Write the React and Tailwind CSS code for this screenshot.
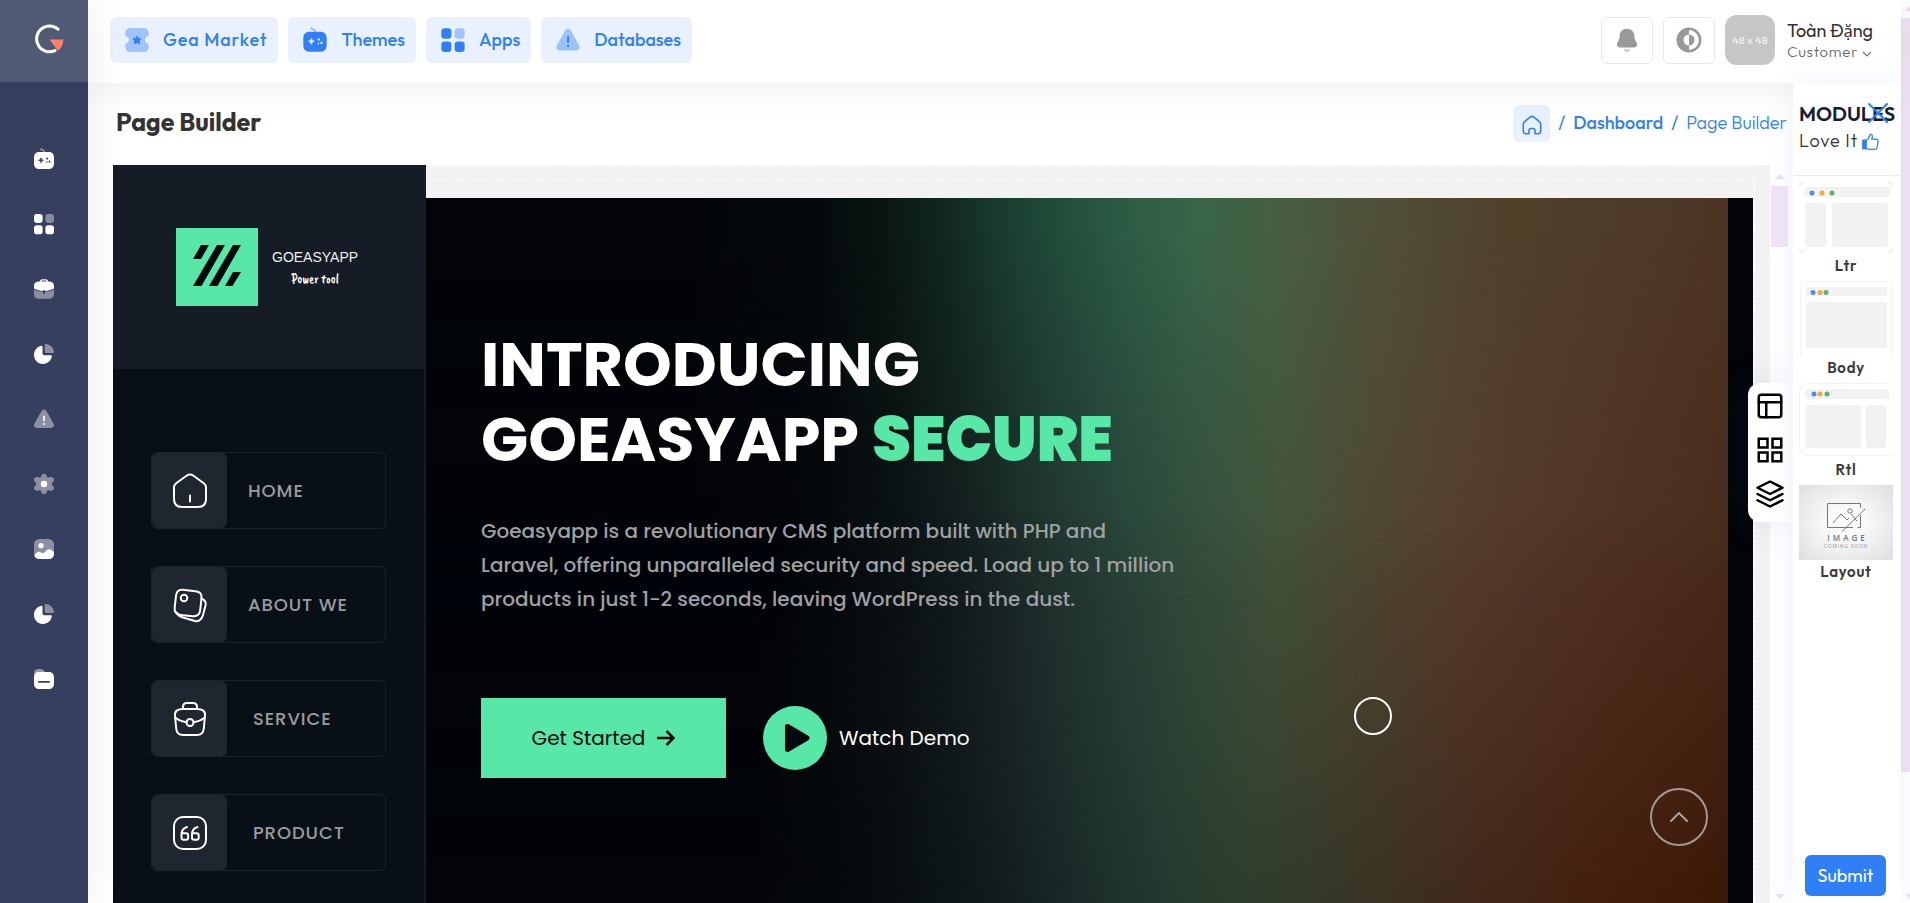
import React from "react";

const sans = "font-['Outfit','Lato',sans-serif]";
const hero = "font-['Poppins','Inter',sans-serif]";

function Game(props) {
  return (
    <svg viewBox="0 0 24 24" fill="currentColor" aria-hidden="true" {...props}>
      <path opacity=".5" d="M8.600 1.200a.7.7 0 0 1 1 .3c.2.5.4.7 1.100.8 1.200.1 2.100.9 2.200 2.200V6h-1.400V4.700c0-.6-.4-.9-1.100-1-1-.1-1.800-.6-2.200-1.500a.7.7 0 0 1 .4-1z" />
      <path
        fillRule="evenodd"
        d="M8 5h8c4.300 0 6 1.900 6 6v5c0 4.100-1.700 6-6 6H8c-4.300 0-6-1.900-6-6v-5c0-4.100 1.700-6 6-6zM8.200 10.800v1.700H6.500v1.500h1.700v1.700h1.500V14h1.700v-1.500H9.700v-1.700zM15.200 10.500a1 1 0 1 0 .01 0zM17.600 13.500a1 1 0 1 0 .01 0zM14.900 14.300a.7.7 0 1 0 .01 0z"
      />
    </svg>
  );
}

function Grid(props) {
  return (
    <svg viewBox="0 0 24 24" fill="currentColor" aria-hidden="true" {...props}>
      <rect x="2" y="2" width="8.600" height="8.900" rx="2.800" />
      <rect x="13.400" y="2" width="8.600" height="8.900" rx="2.800" opacity=".4" />
      <rect x="2" y="13.300" width="8.600" height="8.900" rx="2.800" />
      <rect x="13.400" y="13.300" width="8.600" height="8.900" rx="2.800" />
    </svg>
  );
}

function Warning(props) {
  return (
    <svg viewBox="0 0 24 24" fill="currentColor" aria-hidden="true" {...props}>
      <path opacity=".42" d="M9.600 3.900c1.200-2 3.600-2 4.800 0l7 12.400c1.300 2.300.2 4.700-2.500 4.700H5.100c-2.700 0-3.800-2.400-2.500-4.700z" />
      <rect x="11.200" y="8.500" width="1.700" height="6" rx=".85" />
      <circle cx="12.050" cy="17" r="1" />
    </svg>
  );
}

function Ticket(props) {
  return (
    <svg viewBox="0 0 24 24" fill="currentColor" aria-hidden="true" {...props}>
      <path opacity=".4" d="M7 1.800h10c3.300 0 4.900 1.400 5 4.900v1.400c0 .5-.3.900-.8 1a2.900 2.900 0 0 0 0 5.700c.5.1.8.5.8 1v1.500c-.1 3.500-1.700 4.900-5 4.900H7c-3.300 0-4.900-1.400-5-4.900v-1.500c0-.5.3-.9.8-1a2.900 2.900 0 0 0 0-5.700c-.5-.1-.8-.5-.8-1V6.700c.1-3.500 1.700-4.900 5-4.900z" />
      <path d="M12 8.600l1.100 2.100 2.400.4-1.700 1.700.4 2.400-2.200-1.100-2.200 1.100.4-2.400-1.700-1.700 2.400-.4z" stroke="currentColor" strokeWidth=".8" strokeLinejoin="round" />
    </svg>
  );
}

function Briefcase(props) {
  return (
    <svg viewBox="0 0 24 24" fill="currentColor" aria-hidden="true" {...props}>
      <path opacity=".42" d="M2 12.500c3 1.500 6 2.200 9 2.300v1.400c0 1.100 2 1.100 2 0v-1.400c3-.1 6-.8 9-2.300v4.300c0 3.300-1.700 5-5 5H7c-3.300 0-5-1.700-5-5z" />
      <path fillRule="evenodd" d="M8 4.500C8.100 2.900 9 2.200 10.500 2.200h3c1.500 0 2.400.7 2.500 2.300h1c3.300 0 5 1.500 5 4.500v2.500c-3 1.500-6 2.300-9 2.400-.2-1.300-1.800-1.300-2 0-3-.1-6-.9-9-2.400V9c0-3 1.700-4.500 5-4.500zm1.400 0h5.200c-.1-.8-.4-1-1.200-1h-2.800c-.8 0-1.100.2-1.200 1z" />
    </svg>
  );
}

function Pie(props) {
  return (
    <svg viewBox="0 0 24 24" fill="currentColor" aria-hidden="true" {...props}>
      <path opacity=".42" d="M12.700 3c0-.8.500-1.200 1.300-1.100 4.300.5 7.400 3.500 7.900 7.800.1.800-.3 1.300-1.100 1.300h-6.300c-1.200 0-1.800-.6-1.800-1.800z" />
      <path d="M10.500 4.700v6.600c0 1.300.7 2 2 2h6.300c.7 0 1.100.5 1 1.200-.7 4.400-4.300 7.400-8.900 7.400-5 0-8.900-3.900-8.900-8.900 0-4.600 3-8.500 7.400-9.300.7-.1 1.100.3 1.100 1z" />
    </svg>
  );
}

function Gear(props) {
  return (
    <svg viewBox="0 0 24 24" fill="currentColor" aria-hidden="true" {...props}>
      <path opacity=".42" d="M9.200 4.200C9.500 2.600 10.500 1.800 12 1.800s2.500.8 2.800 2.400c.3 1.100 1 1.500 2.100 1.200 3-1 4.300-.2 4.900 1.400.5 1.500 0 2.400-1.300 3.500-1 .9-1 2.100 0 3.300 1.300 1.100 1.800 2.100 1.300 3.500-.6 1.500-1.900 2.200-4.900 1.300-1.100-.3-1.800.1-2.100 1.200-.3 1.800-1.300 2.600-2.800 2.600s-2.500-.8-2.800-2.600c-.3-1.100-1-1.500-2.100-1.200-3 .9-4.300.2-4.900-1.300-.5-1.400 0-2.400 1.300-3.500 1-1.200 1-2.400 0-3.300-1.300-1.100-1.800-2-1.300-3.500.6-1.600 1.900-2.400 4.900-1.400 1.100.3 1.800-.1 2.100-1.200z" />
      <circle cx="12" cy="12" r="3.200" />
    </svg>
  );
}

function Picture(props) {
  return (
    <svg viewBox="0 0 24 24" fill="currentColor" aria-hidden="true" {...props}>
      <rect opacity=".42" x="2" y="2" width="20" height="20" rx="5.500" />
      <circle cx="9" cy="8.700" r="2.600" />
      <path d="M2.300 18.200l2.400-2.400c1.700-1.500 3-1.300 4.600-.1 1.200.8 2.100.7 3.200-.3l2.400-2.300c1.500-1.300 3-1.300 4.600 0L22 15v1.500c0 3.600-2 5.500-5.500 5.500h-9c-2.700 0-4.600-1.300-5.200-3.800z" />
    </svg>
  );
}

function Folder(props) {
  return (
    <svg viewBox="0 0 24 24" fill="currentColor" aria-hidden="true" {...props}>
      <path opacity=".45" d="M2 8V6.500C2 3.500 3.500 2 6.500 2h2c1.500 0 2.500.5 3.500 1.800l1.200 1.700z" />
      <path fillRule="evenodd" d="M7.500 5h9C20 5 22 7 22 10.500v6c0 3.500-2 5.500-5.500 5.500h-9C4 22 2 20 2 16.500v-6C2 7 4 5 7.500 5zM6.800 14.100a.8.8 0 0 0 0 1.600h10.400a.8.8 0 0 0 0-1.600z" />
    </svg>
  );
}

function Bell() {
  return (
    <svg viewBox="0 0 24 24" className="size-[26px]" fill="#999" aria-hidden="true">
      <path d="M12 1.500c4 0 6.600 2.700 6.800 6.400.1 2.600.2 3.700 1.600 5.800 1.900 2.800.7 5.300-2.600 5.300H6.200c-3.300 0-4.500-2.500-2.600-5.300C5 11.600 5.100 10.500 5.200 7.900 5.400 4.200 8 1.500 12 1.500z" />
      <path opacity=".5" d="M9 20.600h6c-.3 1.600-1.400 2.600-3 2.600s-2.700-1-3-2.600z" />
    </svg>
  );
}

const rail = [
  ["Themes", Game],
  ["Apps", Grid],
  ["Business", Briefcase],
  ["Statistics", Pie],
  ["Alerts", Warning],
  ["Settings", Gear],
  ["Media", Picture],
  ["Reports", Pie],
  ["Files", Folder],
];

function Sidebar() {
  return (
    <aside className="z-30 flex w-[88px] shrink-0 flex-col bg-[#373f5e] shadow-[0_0_40px_rgba(0,0,0,0.08)]">
      <a href="#" aria-label="Home" className="flex h-[82px] items-center justify-center bg-[#515a75] pb-1 pl-[9px]">
        <svg viewBox="0 0 30 30" className="size-[30px]" aria-hidden="true">
          <path d="M24 5.200A12.900 12.900 0 1 0 21 26.600" fill="none" stroke="#fff" strokeWidth="3" strokeLinecap="round" />
          <path d="M15.500 15.500h13.800c0 5-2 8.800-5.300 11.200z" fill="#ff8064" />
        </svg>
      </a>
      <nav aria-label="Sections" className="flex flex-col items-center gap-[41px] pt-[65px] text-white">
        {rail.map(([label, Icon]) => (
          <a key={label} href="#" aria-label={label}>
            <Icon className="size-6" />
          </a>
        ))}
      </nav>
    </aside>
  );
}

const shortcuts = [
  ["Gea Market", Ticket, "tracking-wider"],
  ["Themes", Game, ""],
  ["Apps", Grid, ""],
  ["Databases", Warning, ""],
];

function Header() {
  return (
    <header className="z-20 flex h-[83px] shrink-0 items-center justify-between bg-white pb-[3px] pl-[22px] pr-[29px] shadow-[0_0_40px_rgba(0,0,0,0.09)]">
      <nav aria-label="Shortcuts" className="flex gap-[10px]">
        {shortcuts.map(([label, Icon, extra]) => (
          <a key={label} href="#" className={`flex h-[46px] items-center gap-3 rounded-md bg-[#e9f1fe] pl-[13px] pr-[11px] text-lg font-medium text-[#2f80f7] ${extra}`}>
            <Icon className="size-7" />
            {label}
          </a>
        ))}
      </nav>
      <div className="flex items-center gap-[10px]">
        <button type="button" aria-label="Notifications" className="flex h-[47px] w-[52px] items-center justify-center rounded-md border border-[#e8e8e8]">
          <Bell />
        </button>
        <button type="button" aria-label="Toggle theme" className="flex h-[47px] w-[52px] items-center justify-center rounded-md border border-[#e8e8e8]">
          <svg viewBox="0 0 26 26" className="size-[26px]" aria-hidden="true">
            <circle cx="13" cy="13" r="11.200" fill="none" stroke="#999" strokeWidth="2.600" />
            <path d="M13 1v6.500a5.500 5.500 0 0 0 0 11V25A12 12 0 0 1 13 1z" fill="#999" />
            <path d="M13 7.500a5.500 5.500 0 0 1 0 11z" fill="#999" />
          </svg>
        </button>
        <div className="flex size-[50px] items-center justify-center rounded-xl bg-[#c6c6c6] text-[11px] font-light text-white">48 x 48</div>
        <div className="ml-0.5 w-[85px] whitespace-nowrap pt-0.5">
          <div className="text-lg leading-[22px] text-[#333]">Toàn Đặng</div>
          <button type="button" className="flex items-center gap-1 text-[15px] font-light leading-5 tracking-wider text-[#666]">
            Customer
            <svg viewBox="0 0 10 10" className="mt-1 size-[10px]" fill="none" stroke="#777" strokeWidth="1.200" aria-hidden="true">
              <path d="M1 3l4 4 4-4" />
            </svg>
          </button>
        </div>
      </div>
    </header>
  );
}

function TitleRow() {
  return (
    <div className="flex h-[82px] shrink-0 items-center justify-between pb-[2px] pl-7 pr-[6px]">
      <h1 className="text-[25px] font-bold text-[#333]">Page Builder</h1>
      <nav aria-label="Breadcrumb" className="flex items-center gap-2 text-lg text-[#2f80f7]">
        <a href="#" aria-label="Home" className="flex size-[37px] items-center justify-center rounded-md bg-[#e9f1fe]">
          <svg viewBox="0 0 20 20" className="mt-1 size-5" fill="none" stroke="currentColor" strokeWidth="1.600" strokeLinejoin="round" aria-hidden="true">
            <path d="M7 18.800H4.200C2.300 18.800 1.300 17.700 1.300 16V9.200c0-1.100.4-1.900 1.300-2.600l5.500-4.500c1.300-1 2.500-1 3.800 0l5.500 4.500c.9.700 1.300 1.500 1.300 2.600V16c0 1.700-1 2.800-2.900 2.800H13v-3.300c0-1.300-.6-2-1.800-2H8.800c-1.200 0-1.800.7-1.800 2z" />
          </svg>
        </a>
        <span>/</span>
        <a href="#" className="font-medium">Dashboard</a>
        <span>/</span>
        <a href="#" className="font-light">Page Builder</a>
      </nav>
    </div>
  );
}

const lineIcon = {
  viewBox: "0 0 36 36",
  className: "size-9",
  fill: "none",
  stroke: "#fff",
  strokeWidth: 2,
  strokeLinecap: "round",
  strokeLinejoin: "round",
  "aria-hidden": true,
};

const menu = [
  [
    "HOME",
    "pl-[21px]",
    <svg {...lineIcon}>
      <path d="M2 14.500c0-2 .6-3.100 2.200-4.300l10.300-7.400c2.400-1.700 4.600-1.700 7 0l10.300 7.400c1.600 1.200 2.200 2.300 2.200 4.300V26c0 5.200-2.800 8-8 8H10c-5.200 0-8-2.800-8-8z" />
      <path d="M18 22.500v6" />
    </svg>,
  ],
  [
    "ABOUT WE",
    "pl-[21px]",
    <svg {...lineIcon}>
      <path d="M10.500 2.700l13 1.500c4.700.5 6.500 3 6 7.500l-1.300 11.500c-.5 4.500-3 6.500-7.500 6l-12-1.300c-4.500-.5-6.600-3-6-7.500L4 9c.5-4.500 2.200-6.700 6.500-6.300z" />
      <circle cx="12" cy="11" r="3.300" />
      <path d="M29.500 11.500c3.500 1.500 4.800 3.500 4 7L31 28c-1.500 5-4 6.800-8 6L11 30.500c-3-.8-5-2-6.500-5" />
    </svg>,
  ],
  [
    "SERVICE",
    "pl-[26px]",
    <svg {...lineIcon}>
      <path d="M11 8V6c0-2.800 1.300-4 4-4h6c2.700 0 4 1.200 4 4v2M11 8h14c5.500 0 8.500 2.200 8 6.500l-1.200 13c-.4 4.500-2.500 6.500-7 6.500H11.200c-4.500 0-6.600-2-7-6.500L3 14.500C2.500 10.200 5.500 8 11 8z" />
      <circle cx="18" cy="21.500" r="3.500" />
      <path d="M3 16.500c3.500 2.700 7.500 4.300 11.500 4.700M33 16.500c-3.500 2.700-7.500 4.300-11.500 4.700" />
    </svg>,
  ],
  [
    "PRODUCT",
    "pl-[26px]",
    <svg {...lineIcon}>
      <rect x="2" y="2" width="32" height="32" rx="9" />
      <path d="M15 12c-4 1-5.500 3-5.500 8v2.500c0 1.500.7 2.200 2.200 2.200h2.300c1.500 0 2.200-.7 2.200-2.200v-2c0-1.500-.7-2.200-2.200-2.200H9.800M25.500 12c-4 1-5.500 3-5.500 8v2.500c0 1.500.7 2.200 2.200 2.200h2.300c1.500 0 2.200-.7 2.200-2.200v-2c0-1.500-.7-2.200-2.200-2.200h-4.200" />
    </svg>,
  ],
];

function SiteMenu() {
  return (
    <div className={`flex w-[313px] shrink-0 flex-col bg-[#080f17] ${hero}`}>
      <a href="#" className="flex h-[204px] items-center gap-[14px] bg-[#161c25] pl-[63px]">
        <svg viewBox="0 0 82 78" className="h-[78px] w-[82px]" aria-hidden="true">
          <path fill="#57e8a7" d="M0 0h82v78H0z" />
          <path fill="#05090e" d="M25 17h8l-8 14h-8zM41 17h8L25.500 58H17zM57 17h8L41.500 58H33zM57 44h8l-8.500 14H49z" />
        </svg>
        <span className="flex flex-col items-center pt-1 text-white">
          <span className="font-['Liberation_Sans',sans-serif] text-sm leading-5 text-[#eee]">GOEASYAPP</span>
          <span className="font-['Caveat_Brush','Patrick_Hand','Caveat','Lato',sans-serif] text-[13px] leading-6">Power tool</span>
        </span>
      </a>
      <nav aria-label="Site" className="flex flex-1 flex-col gap-[37px] border-r-2 border-[#161b23] pl-[38px] pr-[38px] pt-[83px]">
        {menu.map(([label, pad, icon]) => (
          <a key={label} href="#" className="flex h-[77px] shrink-0 items-center rounded-md border border-[#1c222a]">
            <span className="flex h-full w-[75px] items-center justify-center rounded-md bg-[#20262f]">{icon}</span>
            <span className={`text-lg font-medium tracking-wider text-[#9b9b9b] ${pad}`}>{label}</span>
          </a>
        ))}
      </nav>
    </div>
  );
}

function Hero() {
  return (
    <section className={`relative flex-1 bg-[#020409] pr-[25px] ${hero}`}>
      <div className="relative h-full pl-[55px] pt-[129px]">
        <div className="absolute inset-0 bg-[linear-gradient(93deg,#020409_28%,#0b1013_36%,#151d1f_42%,#21312e_48%,#2a4238_54%,#374d3c_60%,#43523a_65%,#4e4832_71%,#573e2c_78%,#54372a_84%,#4f3021_92%,#482a1c_100%)]" />
        <div className="absolute inset-0 bg-[linear-gradient(90deg,#020409_20%,#05090d_30%,#0a1512_35%,#11281f_40%,#1d4434_46%,#2b5a45_53%,#386548_59%,#465f42_65%,#505038_73%,#50412b_83%,#4d3424_100%)] [mask-image:linear-gradient(#000_5%,rgba(0,0,0,.5)_30%,transparent_60%)]" />
        <div className="absolute inset-0 bg-[linear-gradient(90deg,#020409_25%,#070b0e_34%,#101a1b_43%,#1a2a28_50%,#24392f_57%,#2e3d2c_63%,#353828_69%,#3b3022_75%,#42281a_81%,#43200f_89%,#3c1806_100%)] [mask-image:linear-gradient(transparent_45%,rgba(0,0,0,.5)_75%,#000)]" />
        <div className="relative">
          <h2 className="text-[62px] font-bold leading-[75px] text-white">
            <span className="block">INTRODUCING</span>
            <span className="block">
              GOEASYAPP <span className="font-black text-[#57e8a7]">SECURE</span>
            </span>
          </h2>
          <p className="mt-[37px] text-xl font-medium leading-[34px] text-[#9fa1a2]">
            Goeasyapp is a revolutionary CMS platform built with PHP and
            <br />
            Laravel, offering unparalleled security and speed. Load up to 1 million
            <br />
            products in just 1-2 seconds, leaving WordPress in the dust.
          </p>
          <div className="mt-[82px] flex items-center gap-[37px]">
            <a href="#" className="flex h-20 w-[245px] items-center justify-center gap-3 bg-[#57e8a7] text-xl text-[#05090e]">
              Get Started
              <svg viewBox="0 0 18 18" className="size-[18px]" fill="none" stroke="currentColor" strokeWidth="2.600" aria-hidden="true">
                <path d="M0 9h16M9.500 2L16.500 9l-7 7" />
              </svg>
            </a>
            <a href="#" className="flex items-center gap-3 text-xl text-white">
              <svg viewBox="0 0 64 64" className="size-16" aria-hidden="true">
                <circle cx="32" cy="32" r="32" fill="#57e8a7" />
                <path d="M24.500 20.500L44 32 24.500 43.500z" fill="#05090e" stroke="#05090e" strokeWidth="5" strokeLinejoin="round" />
              </svg>
              Watch Demo
            </a>
          </div>
        </div>
        <span className="absolute right-[336px] top-[499px] size-[38px] rounded-full border-2 border-white" />
        <button type="button" aria-label="Back to top" className="absolute right-[20px] top-[590px] flex size-[58px] items-center justify-center rounded-full border-2 border-[#a09a96]">
          <svg viewBox="0 0 18 10" className="h-[10px] w-[18px]" fill="none" stroke="#a8a29e" strokeWidth="2" strokeLinecap="round" aria-hidden="true">
            <path d="M1 9l8-8 8 8" />
          </svg>
        </button>
      </div>
    </section>
  );
}

function Arrow({ down }) {
  return (
    <svg viewBox="0 0 10 5" className="h-[5px] w-[10px] shrink-0" fill="#ecdff2" aria-hidden="true">
      <path d={down ? "M0 0h10L5 5z" : "M5 0l5 5H0z"} />
    </svg>
  );
}

function FrameTabs() {
  const p = { viewBox: "0 0 24 24", className: "size-[30px]", fill: "none", stroke: "#000", strokeWidth: 2, strokeLinejoin: "round", strokeLinecap: "round", "aria-hidden": true };
  return (
    <div className="absolute right-0 top-[300px] z-10 flex w-[45px] flex-col gap-[14px] rounded-l-xl bg-white pb-[13px] pl-[7px] pt-2 shadow-[-4px_0_40px_rgba(60,80,160,0.12)]">
      <button type="button" aria-label="Layout">
        <svg {...p}>
          <rect x="3" y="3" width="18" height="18" rx="2" />
          <path d="M3 9h18M9 21V9" />
        </svg>
      </button>
      <button type="button" aria-label="Blocks">
        <svg {...p} strokeLinejoin="miter">
          <path d="M3 3h7v7H3zM14 3h7v7h-7zM14 14h7v7h-7zM3 14h7v7H3z" />
        </svg>
      </button>
      <button type="button" aria-label="Layers">
        <svg {...p}>
          <path d="M12 2L2 7l10 5 10-5zM2 17l10 5 10-5M2 12l10 5 10-5" />
        </svg>
      </button>
    </div>
  );
}

function Dots({ xs, y }) {
  return (
    <>
      <circle cx={xs[0]} cy={y} r="2.500" fill="#4b8df8" />
      <circle cx={xs[1]} cy={y} r="2.500" fill="#efad35" />
      <circle cx={xs[2]} cy={y} r="2.500" fill="#62b266" />
    </>
  );
}

const thumb = { viewBox: "0 0 94 75", className: "h-[75px] w-[94px]", "aria-hidden": true };

const modules = [
  [
    "Ltr",
    <svg {...thumb}>
      <path d="M0 3h6L0 9zM94 3h-6l6 6zM0 74h6l-6-6zM94 74h-6l6-6z" fill="#f3f3f3" />
      <rect x="5" y="8" width="86" height="10" rx="3" fill="#f2f2f2" />
      <rect x="6" y="24" width="21" height="44" rx="3" fill="#f2f2f2" />
      <rect x="33" y="24" width="56" height="44" rx="3" fill="#f2f2f2" />
      <Dots xs={[13, 23, 33]} y={14} />
    </svg>,
  ],
  [
    "Body",
    <svg {...thumb}>
      <rect x="1.500" y=".5" width="92" height="78" rx="4" fill="none" stroke="#f2f2f2" />
      <rect x="7" y="6" width="81" height="9" rx="3" fill="#f2f2f2" />
      <rect x="7" y="21" width="81" height="46" rx="3" fill="#f2f2f2" />
      <Dots xs={[14, 21, 27]} y={11.5} />
    </svg>,
  ],
  [
    "Rtl",
    <svg {...thumb}>
      <rect x=".5" y=".5" width="96" height="72" rx="9" fill="none" stroke="#f2f2f2" />
      <rect x="6" y="6" width="84" height="10" rx="3" fill="#f2f2f2" />
      <rect x="6" y="22" width="56" height="43" rx="3" fill="#f2f2f2" />
      <rect x="67" y="22" width="20" height="43" rx="3" fill="#f2f2f2" />
      <Dots xs={[15, 21, 28]} y={11} />
    </svg>,
  ],
  [
    "Layout",
    <span className="flex h-[75px] w-[94px] flex-col items-center bg-[radial-gradient(#fbfbfb_25%,#dcdee0)] pt-[18px] text-[#777]">
      <svg viewBox="0 0 38 30" className="h-[30px] w-[38px] shrink-0" fill="none" stroke="currentColor" aria-hidden="true">
        <path d="M26 24.500H.5V.5h33v4M33.500 12v12.500h-3M38 6L15 28.500M6 20l8-9 6 6 2-2M24 11l6 7" />
        <circle cx="23" cy="8" r="2.200" />
      </svg>
      <span className="pl-[3px] font-['Open_Sans',sans-serif] text-[8px] font-semibold leading-[10px] tracking-[3px]">IMAGE</span>
      <span className="whitespace-nowrap font-['Open_Sans',sans-serif] text-[5px] font-normal leading-[6px] text-[#999]">COMING SOON</span>
    </span>,
  ],
];

function Modules() {
  return (
    <aside className="z-20 flex w-[108px] shrink-0 flex-col bg-white shadow-[0_0_24px_rgba(120,140,230,0.12)]">
      <div className="relative h-[93px] border-b border-[#ededf0] pl-[6px] pt-4">
        <h2 className="text-xl font-semibold leading-[30px] text-[#171c33]">MODULES</h2>
        <button type="button" aria-label="Close" className="absolute right-[13px] top-[20px] text-[#2f80f7]">
          <svg viewBox="0 0 20 20" className="size-5" stroke="currentColor" strokeWidth="2" strokeLinecap="round" aria-hidden="true">
            <path d="M1 1l18 18M19 1L1 19" />
          </svg>
        </button>
        <div className="flex items-center gap-1 text-lg font-light leading-6 tracking-wider text-[#333]">
          Love It
          <svg viewBox="0 0 17 17" className="size-[17px]" fill="none" stroke="#2f80f7" strokeWidth="1.300" strokeLinejoin="round" aria-hidden="true">
            <path d="M4 7.500c2-.8 3.200-2.600 3.700-5.200.2-1.400 2.600-1.400 2.700.7 0 1.300-.3 2.200-.8 3.200h4.500c1.500 0 2.200 1 2 2.300l-1 6c-.2 1.200-.9 1.800-2.100 1.800H8c-1.800 0-2.500-.8-4-1.300z" />
            <path d="M.8 7.200H4v8.700H.8z" fill="#2f80f7" />
          </svg>
        </div>
      </div>
      <ul className="flex flex-col pl-[6px] pt-[3px]">
        {modules.map(([label, art]) => (
          <li key={label} className="mb-1 w-[94px]">
            <a href="#" className="block text-center text-[15px] font-semibold leading-[23px] tracking-wider text-[#3a3a3a] [&>svg]:block">
              {art}
              {label}
            </a>
          </li>
        ))}
      </ul>
      <button type="button" className="mb-[7px] ml-[12px] mt-auto h-[41px] w-[81px] rounded-md bg-[#2f80f7] text-lg text-white">
        Submit
      </button>
    </aside>
  );
}

export default function App() {
  return (
    <div className={`flex h-screen overflow-hidden bg-white ${sans}`}>
      <Sidebar />
      <div className="flex min-w-0 flex-1 flex-col">
        <Header />
        <div className="flex min-h-0 flex-1">
          <main className="relative flex min-w-0 flex-1 flex-col">
            <TitleRow />
            <div className="flex min-h-0 flex-1 overflow-hidden pl-[25px]">
              <div className="flex min-w-0 flex-1 overflow-hidden bg-[#f2f2f2]">
                <SiteMenu />
                <div className="mr-[15px] flex min-w-0 flex-1 flex-col border-r border-t border-dashed border-white pt-[13px]">
                  <div className="flex flex-1 flex-col border-r border-t border-dashed border-white pt-[18px]">
                    <Hero />
                  </div>
                </div>
              </div>
              <div className="flex w-[23px] shrink-0 flex-col items-center pb-1 pr-1 pt-[9px]">
                <Arrow />
                <div className="mt-[7px] h-[61px] w-[17px] bg-[#f0e4f5]" />
                <div className="flex-1" />
                <Arrow down />
              </div>
            </div>
            <FrameTabs />
          </main>
          <Modules />
        </div>
      </div>
      <div className="flex w-[9px] shrink-0 flex-col items-end overflow-hidden bg-white pb-1 pt-[6px]">
        <svg viewBox="0 0 5 5" className="size-[5px] shrink-0" fill="#ecdff2" aria-hidden="true">
          <path d="M5 0v5H0z" />
        </svg>
        <div className="mt-[7px] h-[754px] w-full shrink bg-[#f0e4f5]" />
        <div className="flex-1" />
        <svg viewBox="0 0 5 5" className="size-[5px] shrink-0" fill="#ecdff2" aria-hidden="true">
          <path d="M0 0h5v5z" />
        </svg>
      </div>
    </div>
  );
}
